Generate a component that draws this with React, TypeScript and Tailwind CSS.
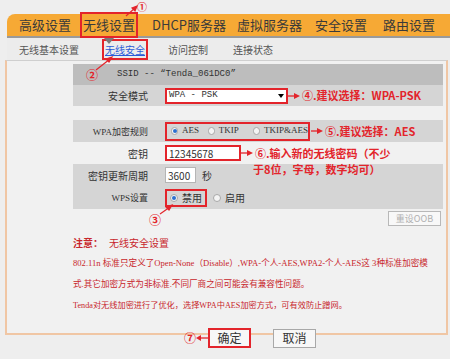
import React from "react";

const navItems = [
  { label: "高级设置", w: "w-[64px]" },
  { label: "无线设置", w: "w-[69px]" },
  { label: "DHCP服务器", w: "w-[85px]" },
  { label: "虚拟服务器", w: "w-[78px]" },
  { label: "安全设置", w: "w-[68px]" },
  { label: "路由设置", w: "w-[60px]" },
];

function Radio({ checked }: { checked?: boolean }) {
  return (
    <span className="inline-flex items-center justify-center w-[8px] h-[8px] rounded-full border border-[#a8a8a8] bg-[#f4f4f4] mr-[4px]">
      {checked && <span className="w-[4px] h-[4px] rounded-full bg-[#2c6fd0]" />}
    </span>
  );
}

function Label({ children }: { children: React.ReactNode }) {
  return <div className="w-[82px] pr-[7px] text-right shrink-0">{children}</div>;
}

function Note({ children, className = "" }: { children: React.ReactNode; className?: string }) {
  return (
    <span className={"flex items-center text-[#e3242b] font-bold text-[11px] " + className}>
      <svg width="12" height="8" viewBox="0 0 12 8" className="mr-[2px]">
        <line x1="0" y1="4" x2="8" y2="4" stroke="#e3242b" strokeWidth="1.3" />
        <polygon points="6,1 12,4 6,7" fill="#e3242b" />
      </svg>
      {children}
    </span>
  );
}

export default function App() {
  return (
    <div className="relative w-[450px] h-[359px] overflow-hidden bg-[#eeeeee] text-[#333] font-['Noto_Sans_CJK_SC',sans-serif]">
      <div className="h-[14px]" />
      {/* main nav */}
      <div className="ml-[7px] h-[24px] bg-[#f6a935] rounded-tl-[8px] flex items-center pl-[12px] text-[13px] text-[#3a3a3a] border-b-[2px] border-[#9a9a9a]">
        {navItems.map((n, i) => (
          <div key={i} className={n.w + " shrink-0 flex"}>
            <span className={i === 1 ? "outline outline-2 outline-[#e3242b] outline-offset-[1px]" : ""}>{n.label}</span>
          </div>
        ))}
      </div>
      {/* sub nav */}
      <div className="relative ml-[7px] h-[22px] flex items-center pl-[12px] text-[10px] text-[#555] bg-[#ececec]">
        <span className="absolute left-[97px] top-0 w-0 h-0 border-l-[5px] border-r-[5px] border-t-[6px] border-l-transparent border-r-transparent border-t-[#7a7a7a]" />
        <span className="w-[86px]">无线基本设置</span>
        <span className="w-[63px]">
          <span className="text-[#2a5bd7] underline outline outline-2 outline-[#e3242b] outline-offset-[1px]">无线安全</span>
        </span>
        <span className="w-[65px]">访问控制</span>
        <span>连接状态</span>
      </div>

      {/* content box */}
      <div className="ml-[5px] w-[443px] h-[275px] border-t border-t-[#cfcfcf] border-l-2 border-r-2 border-b-2 border-l-[#f0c6a4] border-r-[#f0c6a4] border-b-[#f0c6a4] bg-[#f1f1f1] pt-[3px] pl-[66px] pr-[3px] text-[10px]">
        <div className="w-[370px]">
          <div className="h-[21px] bg-[#bdbdbd] flex items-center pl-[44px] font-['Liberation_Mono','Noto_Sans_CJK_SC',monospace] text-[9px]">
            SSID -- “Tenda_061DC0”
          </div>
          <div className="h-[21px] bg-[#d5d5d5] flex items-center">
            <Label>安全模式</Label>
            <div className="pl-[10px] flex items-center">
              <div className="w-[123px] h-[16px] bg-white border-2 border-[#e3242b] flex items-center justify-between px-[2px] font-['Liberation_Mono',monospace] text-[9px]">
                <span>WPA - PSK</span>
                <span className="w-0 h-0 border-l-[3px] border-r-[3px] border-t-[4px] border-l-transparent border-r-transparent border-t-black" />
              </div>
              <Note>④.建议选择：WPA-PSK</Note>
            </div>
          </div>
          <div className="h-[14px]" />
          <div className="h-[22px] bg-[#d5d5d5] flex items-center">
            <Label>
              <span className="font-['Liberation_Serif','Noto_Sans_CJK_SC',serif] text-[9px]">WPA加密规则</span>
            </Label>
            <div className="pl-[10px] flex items-center">
              <div className="w-[145px] h-[19px] border-2 border-[#e3242b] flex items-center pl-[4px] text-[9px] font-['Liberation_Serif',serif]">
                <Radio checked />
                <span className="w-[30px]">AES</span>
                <Radio />
                <span className="w-[40px]">TKIP</span>
                <Radio />
                <span>TKIP&amp;AES</span>
              </div>
              <Note className="ml-[1px]">⑤.建议选择：AES</Note>
            </div>
          </div>
          <div className="h-[22px] flex items-center">
            <Label>密钥</Label>
            <div className="pl-[10px] flex items-start pt-[3px] h-full">
              <div className="w-[76px] h-[16px] bg-white border-2 border-[#e3242b] flex items-center px-[2px] text-[10px]">
                12345678
              </div>
              <div className="relative">
                <Note className="h-[16px]">⑥.输入新的无线密码（不少</Note>
                <div className="absolute left-[12px] top-[16px] whitespace-nowrap text-[#e3242b] font-bold text-[11px]">于8位，字母，数字均可）</div>
              </div>
            </div>
          </div>
          <div className="h-[22px] bg-[#d5d5d5] flex items-center">
            <Label>密钥更新周期</Label>
            <div className="pl-[10px] flex items-center">
              <div className="w-[31px] h-[16px] bg-white border border-[#b5b5b5] flex items-center px-[2px] text-[10px]">3600</div>
              <span className="ml-[6px]">秒</span>
            </div>
          </div>
          <div className="h-[23px] bg-[#d5d5d5] flex items-center">
            <Label>
              <span className="font-['Liberation_Serif','Noto_Sans_CJK_SC',serif] text-[9px]">WPS设置</span>
            </Label>
            <div className="pl-[10px] flex items-center">
              <div className="h-[18px] border-2 border-[#e3242b] flex items-center px-[3px]">
                <Radio checked />
                <span>禁用</span>
              </div>
              <span className="ml-[6px] flex items-center">
                <Radio />
                <span>启用</span>
              </span>
            </div>
          </div>
          <div className="flex justify-end pr-[2px] mt-[2px]">
            <div className="w-[53px] h-[15px] border border-[#b8b8b8] bg-[#f8f8f8] text-[#b0b0b0] text-[9px] flex items-center justify-center">
              重设OOB
            </div>
          </div>
          <div className="mt-[9px] text-[10px] text-[#c8262c]">
            <span className="font-bold">注意：</span>
            <span className="ml-[6px]">无线安全设置</span>
          </div>
          <div className="mt-[3px] text-[8.6px] leading-[21px] text-[#c8262c] whitespace-nowrap font-['Liberation_Serif','Noto_Sans_CJK_SC',serif]">
            <div>802.11n 标准只定义了Open-None（Disable）,WPA-个人-AES,WPA2-个人-AES这 3种标准加密模</div>
            <div>式.其它加密方式为非标准.不同厂商之间可能会有兼容性问题。</div>
            <div className="text-[8.2px]">Tenda对无线加密进行了优化，选择WPA中AES加密方式，可有效防止蹭网。</div>
          </div>
          <div className="mt-[12px] flex items-center pl-[111px] text-[12px]">
            <span className="flex items-center text-[#e3242b] font-bold text-[12px]">
              ⑦
              <svg width="12" height="8" viewBox="0 0 12 8">
                <polygon points="0,4 5,1 5,7" fill="#e3242b" />
                <line x1="4" y1="4" x2="12" y2="4" stroke="#e3242b" strokeWidth="1.3" />
              </svg>
            </span>
            <div className="w-[43px] h-[20px] border-2 border-[#e3242b] bg-[#f7f7f7] flex items-center justify-center">确定</div>
            <div className="ml-[22px] w-[43px] h-[19px] border border-[#a8a8a8] bg-[#f7f7f7] flex items-center justify-center">取消</div>
          </div>
        </div>
      </div>

      {/* overlay annotations */}
      <span className="absolute left-[137px] top-[1px] leading-[12px] text-[10px] font-bold text-[#e3242b]">①</span>
      <span className="absolute left-[86px] top-[66px] text-[12px] font-bold text-[#e3242b]">②</span>
      <span className="absolute left-[149px] top-[211px] text-[12px] font-bold text-[#e3242b]">③</span>
      <svg className="absolute left-0 top-0 pointer-events-none" width="450" height="359">
        <g stroke="#e3242b" strokeWidth="1.2" fill="#e3242b">
          <line x1="126" y1="16" x2="135" y2="8" />
          <polygon points="137,6 132,8 135,11" />
          <line x1="96" y1="70" x2="110" y2="59" />
          <polygon points="112,57 106,59 109,62" />
          <line x1="160" y1="214" x2="170" y2="207" />
          <polygon points="172,205 166,207 169,210" />
        </g>
      </svg>
    </div>
  );
}
